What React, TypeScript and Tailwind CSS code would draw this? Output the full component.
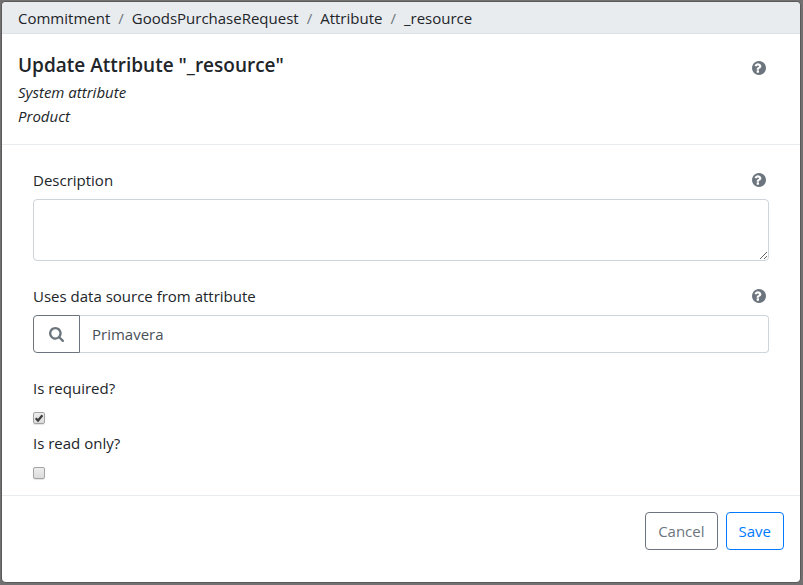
import React, { useState } from "react";

const crumbs = ["Commitment", "GoodsPurchaseRequest", "Attribute"];

function HelpButton({ topic }: { topic: string }) {
  return (
    <button type="button" aria-label={`Help: ${topic}`} className="flex size-5 shrink-0 items-center justify-center text-[#6c757d]">
      <svg viewBox="128 128 1536 1536" className="size-[14px]" fill="currentColor" aria-hidden="true">
        <path d="M896 1376v-192q0-14-9-23t-23-9h-192q-14 0-23 9t-9 23v192q0 14 9 23t23 9h192q14 0 23-9t9-23zM1152 704q0-88-55.5-163t-138.5-116-170-41q-243 0-371 213-15 24 8 42l132 100q7 6 19 6 16 0 25-12 53-68 86-92 34-24 86-24 48 0 85.5 26t37.5 59q0 38-20 61t-68 45q-63 28-115.5 86.5t-52.5 125.5v36q0 14 9 23t23 9h192q14 0 23-9t9-23q0-19 21.5-49.5t54.5-49.5q32-18 49-28.5t46-35 44.5-48 28-60.5 12.5-81zM1664 896q0 209-103 385.5t-279.5 279.5-385.5 103-385.5-103-279.5-279.5-103-385.5 103-385.5 279.5-279.5 385.5-103 385.5 103 279.5 279.5 103 385.5z" />
      </svg>
    </button>
  );
}

function SearchIcon() {
  return (
    <svg viewBox="64 128 1664 1664" className="size-[15px]" fill="currentColor" aria-hidden="true">
      <path d="M1216 832q0-185-131.5-316.5t-316.5-131.5-316.5 131.5-131.5 316.5 131.5 316.5 316.5 131.5 316.5-131.5 131.5-316.5zm512 832q0 52-38 90t-90 38q-54 0-90-38l-343-342q-179 124-399 124-143 0-273.5-55.5t-225-150-150-225-55.5-273.5 55.5-273.5 150-225 225-150 273.5-55.5 273.5 55.5 225 150 150 225 55.5 273.5q0 220-124 399l343 343q37 37 37 90z" />
    </svg>
  );
}

function CheckField({ id, label, initial }: { id: string; label: string; initial: boolean }) {
  const [checked, setChecked] = useState(initial);
  return (
    <div className="flex flex-col items-start gap-3">
      <label htmlFor={id}>{label}</label>
      <span className="grid">
        <input
          id={id}
          type="checkbox"
          checked={checked}
          onChange={(e) => setChecked(e.target.checked)}
          className="col-start-1 row-start-1 size-3 appearance-none rounded-[2px] border border-[#a3a3a3] bg-linear-to-b from-[#ededed] to-[#dcdcdc] shadow-[0_1px_1px_#e4e4e4]"
        />
        {checked && (
          <svg viewBox="0 0 12 12" className="pointer-events-none col-start-1 row-start-1 size-3" aria-hidden="true">
            <path d="M2.7 6.2 5 8.5 9.4 3.2" fill="none" stroke="#3c3c3c" strokeWidth="2.2" />
          </svg>
        )}
      </span>
    </div>
  );
}

export default function App() {
  const [source, setSource] = useState("Primavera");
  const [description, setDescription] = useState("");
  return (
    <div className="flex min-h-screen flex-col bg-[#727070] pt-[2px] pr-[3px] pb-[3px] pl-[2px] font-['Open_Sans','Noto_Sans',sans-serif] text-[15px] leading-6 text-[#212529]">
      <form
        role="dialog"
        aria-labelledby="dialog-title"
        onSubmit={(e) => e.preventDefault()}
        className="flex grow flex-col overflow-hidden rounded-[4px] bg-white ring-1 ring-[#5b5a5a]"
      >
        <nav aria-label="Breadcrumb" className="border-b border-[#dee2e6] bg-[#e9ecef] px-4 pt-1 pb-[3px]">
          <ol className="flex flex-wrap gap-2">
            {crumbs.map((crumb) => (
              <li key={crumb} className="flex gap-2">
                <a href="#">{crumb}</a>
                <span className="text-[#6c757d]">/</span>
              </li>
            ))}
            <li aria-current="page">_resource</li>
          </ol>
        </nav>

        <header className="flex items-start justify-between border-b border-[#e9ecef] py-4 pr-[31px] pl-4">
          <div>
            <h1 id="dialog-title" className="text-[19px] leading-[30px] font-semibold">
              Update Attribute "_resource"
            </h1>
            <p className="italic">System attribute</p>
            <p className="italic">Product</p>
          </div>
          <div className="flex h-9 items-center">
            <HelpButton topic="Update Attribute" />
          </div>
        </header>

        <div className="px-[31px] pt-[23px] pb-4">
          <div className="flex items-center justify-between">
            <label htmlFor="description">Description</label>
            <HelpButton topic="Description" />
          </div>
          <textarea
            id="description"
            value={description}
            onChange={(e) => setDescription(e.target.value)}
            rows={2}
            className="mt-[7px] block h-[62px] w-full resize-y rounded-[4px] border border-[#ced4da] px-3 py-[6px]"
          />

          <div className="mt-[23px] flex items-center justify-between">
            <label htmlFor="source">Uses data source from attribute</label>
            <HelpButton topic="Uses data source from attribute" />
          </div>
          <div className="mt-[7px] flex">
            <button
              type="button"
              aria-label="Search"
              className="flex h-[38px] w-[47px] items-center justify-center rounded-l-[4px] border border-[#6c757d] text-[#6c757d]"
            >
              <SearchIcon />
            </button>
            <input
              id="source"
              type="text"
              value={source}
              onChange={(e) => setSource(e.target.value)}
              className="h-[38px] min-w-0 grow rounded-r-[4px] border border-l-0 border-[#ced4da] px-3 text-[#495057]"
            />
          </div>

          <div className="mt-[23px] flex flex-col gap-[7px]">
            <CheckField id="required" label="Is required?" initial={true} />
            <CheckField id="readonly" label="Is read only?" initial={false} />
          </div>
        </div>

        <footer className="flex justify-end gap-2 border-t border-[#e9ecef] p-4">
          <button type="button" className="h-[38px] rounded-[4px] border border-[#6c757d] px-3 text-[#6c757d]">
            Cancel
          </button>
          <button type="submit" className="h-[38px] rounded-[4px] border border-[#007bff] px-3 text-[#007bff]">
            Save
          </button>
        </footer>
      </form>
    </div>
  );
}
